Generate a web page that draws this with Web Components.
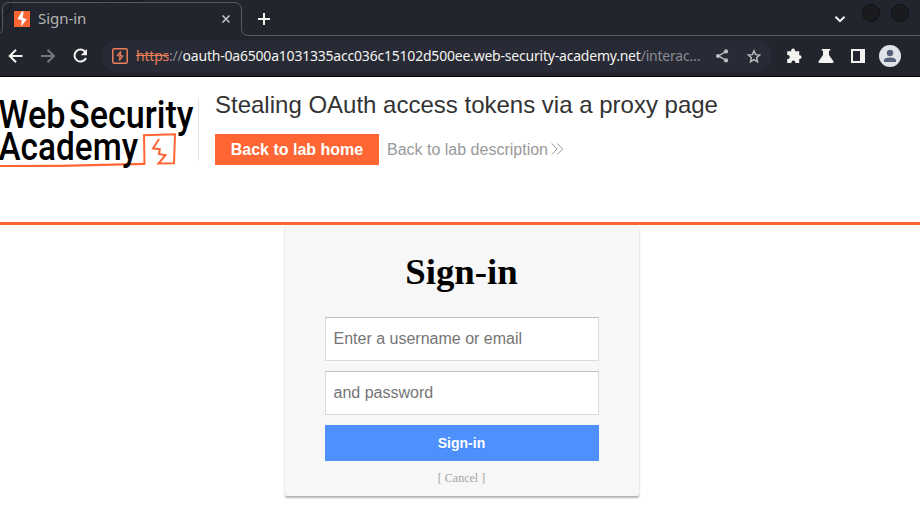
<!DOCTYPE html>
<html lang="en"><head><meta charset="utf-8"><title>Sign-in</title>
<style>html,body{margin:0;background:#fff;overflow:hidden}body{width:920px;height:520px}</style></head>
<body>
<browser-window>
<tab-strip slot="chrome">Sign-in</tab-strip>
<address-bar slot="chrome"></address-bar>
<lab-header><span slot="title">Stealing OAuth access tokens via a proxy page</span><span slot="home">Back to lab home</span><span slot="description">Back to lab description</span></lab-header>
<login-card><span slot="heading">Sign-in</span></login-card>
</browser-window>
<script>
const define=(name,html)=>customElements.define(name,class extends HTMLElement{
  constructor(){super();const t=document.createElement('template');t.innerHTML=html;this.attachShadow({mode:'open'}).append(t.content.cloneNode(true));}
});

define('browser-window',`<style>:host{display:flex;flex-direction:column;width:920px;height:520px;background:#fff;overflow:hidden}</style><slot name="chrome"></slot><slot></slot>`);

define('tab-strip',`<style>
:host{display:grid;height:36px;background:#22252e;font:15px/20px "Noto Sans",sans-serif;color:#b4b3b2}
svg,.row{grid-area:1/1}
.row{display:flex;align-items:center;height:36px;padding-left:38px;padding-bottom:1px;box-sizing:border-box}
.label{letter-spacing:-.05px}
</style>
<svg width="920" height="36" fill="none">
<path d="M0 17 Q10 14 12 2M80 0Q105 4 145 0M0 28V20" stroke="#191c23" stroke-width="2"/>
<path d="M0 33.500Q2.500 32 2.500 28V9Q2.500 2.500 9 2.500H234Q241.500 2.500 241.500 10V28Q241.500 35.500 249 35.500H920" stroke="#575a61"/>
<path d="M14 11h16v16H14z" fill="#ff6633"/>
<path d="M21.800 11.500L17.400 19.300l4.300.8-.6 6.400 5.600-7.300-3.900-1.200.8-6.500z" fill="#fff"/>
<path d="M222.500 15.500l7 7m0-7l-7 7" stroke="#c4c4c3" stroke-width="1.600"/>
<path d="M258 19h12m-6-6v12" stroke="#f3f3ef" stroke-width="2"/>
<path d="M835.500 16.800l4.500 4.400 4.500-4.400" stroke="#f3f3ef" stroke-width="2"/>
<circle cx="871" cy="13" r="8.600" fill="#1a1b1f" stroke="#101216"/><circle cx="900" cy="13" r="8.600" fill="#1a1b1f" stroke="#101216"/>
</svg><div class="row"><span class="label"><slot></slot></span></div>`);

define('address-bar',`<style>
:host{display:grid;height:41px;background:#22252e;border-bottom:1px solid #000;box-sizing:border-box;font:14px/20px "Noto Sans",sans-serif}
svg,.row{grid-area:1/1}
.row{display:flex;align-items:center;height:40px;padding-left:136px;white-space:pre;letter-spacing:-.21px}
s{color:#ed7f5c}.dim{color:#8b8d92}.host{color:#f3f3ef}
</style>
<svg width="920" height="40" viewBox="0 36 920 40" fill="none">
<rect x="102" y="40" width="670" height="32" rx="16" fill="#282a35"/>
<g stroke-width="2"><path d="M22.500 56H10m6-6.300L9.700 56l6.300 6.300" stroke="#f3f3ef"/><path d="M41 56h13m-6.500-6.300L54 56l-6.500 6.300" stroke="#77797f"/>
<path d="M85.500 52.200A6 6 0 1 0 86 58" stroke="#f3f3ef"/></g><path d="M87 49v6.200h-6.200z" fill="#f3f3ef"/>
<rect x="112.800" y="48.800" width="14.400" height="14.400" rx="1.500" stroke="#ed7f5c" stroke-width="1.500"/>
<path d="M120.800 51.500l-3.300 4 2.700.8M120.800 51.500l-.6 3.800 2.500.8-3.300 4.400.7-4.200" stroke="#ed7f5c" stroke-width="1.200"/>
<path d="M726.500 51.200l-8 4.700 8 4.600" stroke="#bcbdbd" stroke-width="1.400"/><g fill="#bcbdbd"><circle cx="726" cy="51.400" r="2.100"/><circle cx="718" cy="56" r="2.100"/><circle cx="726" cy="60.400" r="2.100"/></g>
<path d="M754 50.800l1.600 3.800 4.100.4-3.100 2.700.9 4.100-3.500-2.200-3.500 2.200.9-4.100-3.100-2.700 4.100-.4z" stroke="#bcbdbd" stroke-width="1.400"/>
<g fill="#f3f3ef"><path d="M787.200 51.200h4v-.7a1.900 1.900 0 0 1 3.800 0v.7h4.200v4h.5a1.900 1.900 0 0 1 0 3.800h-.5v4h-3.800v-.5a2 2 0 0 0-4 0v.5h-4.200v-4h.6a2 2 0 0 0 0-4h-.600z"/>
<path d="M821.800 49h8.400v1.800h-1.200v4.200l4.400 6.200q.8 1.800-1 1.800h-12.800q-1.800 0-1-1.800l4.400-6.200v-4.200h-1.200z"/>
<path fill-rule="evenodd" d="M851 49h14v14h-14zm2 2v10h7V51z"/></g>
<circle cx="890" cy="56" r="11" fill="#dfe3e8"/><g fill="#555f78"><circle cx="890" cy="53" r="3.200"/><path d="M884 62v-1.500q0-2.900 6-2.900t6 2.900V62z"/></g>
</svg>
<div class="row"><s>https</s><span class="dim">://</span><span class="host">oauth-0a6500a1031335acc036c15102d500ee.web-security-academy.net</span><span class="dim">/interac…</span></div>`);

define('academy-logo',`<style>:host{display:block;width:198px;height:90px}svg{display:block}text{font-family:Roboto,sans-serif;font-weight:500;fill:#000}</style>
<svg width="198" height="90" viewBox="0 85 198 90" fill="none">
<text x="-1.500" y="128" font-size="38" textLength="67" lengthAdjust="spacingAndGlyphs">Web</text><text x="69" y="128" font-size="38" textLength="124.500" lengthAdjust="spacingAndGlyphs">Security</text>
<path d="M0 166L60 165.800 145 163.800" stroke="#ff6633" stroke-width="2.200"/>
<text x="-1.500" y="160" font-size="38" textLength="139.500" lengthAdjust="spacingAndGlyphs">Academy</text>
<path d="M144.500 164.500L144 135.300 175 134.200 174 163.300 158.500 163.500 165.500 155.200 159 154 159.800 149.200 153 148.500 159 139" stroke="#ff6633" stroke-width="2"/>
</svg>`);

define('lab-header',`<style>
:host{display:flex;height:148px;box-sizing:border-box;border-bottom:3px solid #ff6633;padding-top:8px;font:16px/31px "Liberation Sans",Arial,sans-serif;flex:none}
.line{width:1px;height:62px;margin-top:14px;background:#e2e2e2}
.info{padding:5px 0 0 16px;color:#333}
h2{font-size:24px;line-height:30px;font-weight:400;margin:0 0 14px}
.links{display:flex;gap:8px;align-items:center}
.home{background:#ff6633;color:#fff;font-weight:700;width:164px;text-align:center}
.desc{color:#999;display:flex;align-items:center;gap:3px}
.desc svg{margin-bottom:1px}
</style><academy-logo></academy-logo><div class="line"></div><div class="info"><h2><slot name="title"></slot></h2><div class="links"><a class="home"><slot name="home"></slot></a><a class="desc"><slot name="description"></slot><svg width="13" height="12" fill="none" stroke="#999"><path d="M.8.500L6 6 .8 11.500M6.300.500L11.500 6l-5.200 5.500"/></svg></a></div></div>`);

define('login-card',`<style>
:host{display:block;box-sizing:border-box;width:354px;height:271px;margin-left:284.500px;padding:0 40px;background:#f7f7f7;border-radius:2px;box-shadow:0 2px 2px rgba(0,0,0,.3);text-align:center;font-family:"Liberation Serif","Times New Roman",serif;flex:none}
h1{font-size:36.800px;line-height:42px;margin:0;padding:26px 0 24px;color:#000}
input{display:block;width:100%;height:44px;box-sizing:border-box;margin:0 0 10px;padding:0 8px;font:16px "Liberation Sans",Arial,sans-serif;background:#fff;border:1px solid #d9d9d9;border-top-color:#c0c0c0;border-radius:0}
input::placeholder{color:#757575}
button{display:block;width:100%;height:36px;padding:0;border:0;background:#4d90fe;color:#fff;font:700 14px "Liberation Sans",Arial,sans-serif;text-shadow:0 1px rgba(0,0,0,.1)}
a{display:block;font-size:12px;line-height:14px;margin-top:10px;color:#a5a5a5}
</style><h1><slot name="heading"></slot></h1><input placeholder="Enter a username or email"><input type="password" placeholder="and password"><button>Sign-in</button><a>[ Cancel ]</a>`);
</script></body></html>
